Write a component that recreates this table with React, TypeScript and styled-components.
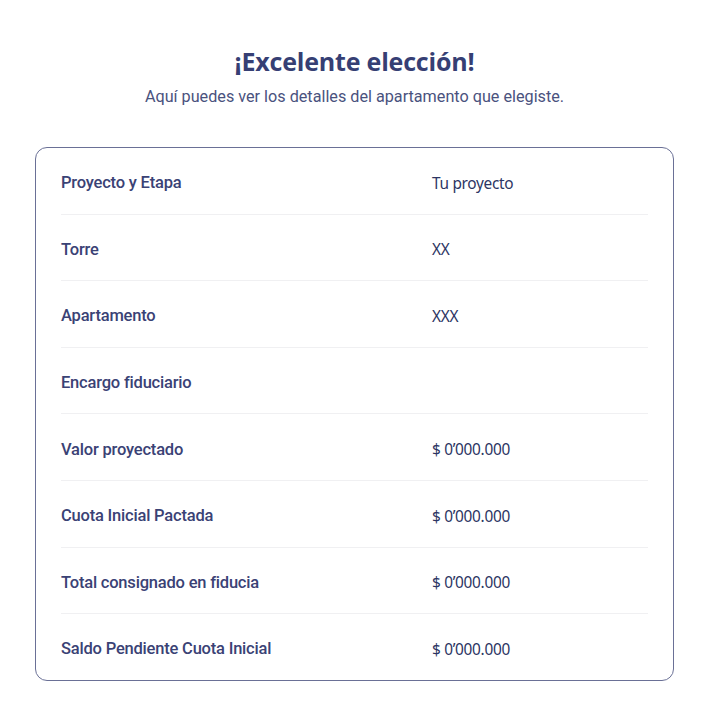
import React from "react";
import styled, { createGlobalStyle } from "styled-components";

const Global = createGlobalStyle`
  html, body { margin: 0; padding: 0; background: #ffffff; }
  body { font-family: Roboto, "Liberation Sans", sans-serif; }
`;

const Page = styled.div`
  width: 710px;
  box-sizing: border-box;
  padding: 44px 36px 0 35px;
  display: flex;
  flex-direction: column;
  align-items: stretch;
`;

const Header = styled.header`
  display: flex;
  flex-direction: column;
  align-items: center;
  gap: 9px;
  margin-bottom: 40px;
`;

const Title = styled.h1`
  margin: 0;
  font-family: "Open Sans", "Noto Sans", sans-serif;
  font-weight: 700;
  font-size: 25px;
  line-height: 34px;
  color: #363f74;
  letter-spacing: -0.2px;
`;

const Subtitle = styled.p`
  margin: 0;
  font-family: Roboto, "Liberation Sans", sans-serif;
  font-size: 16.2px;
  line-height: 20px;
  color: #4a527e;
`;

const Card = styled.section`
  border: 1.5px solid #6a7096;
  border-radius: 12px;
  padding: 0 25px;
  display: flex;
  flex-direction: column;
`;

const Row = styled.div`
  display: grid;
  grid-template-columns: 371px 1fr;
  align-items: center;
  height: 65.6px;
  border-bottom: 1px solid #f0f0f2;
  &:last-child { border-bottom: none; }
`;

const Label = styled.span`
  font-family: Roboto, "Liberation Sans", sans-serif;
  font-weight: 500;
  font-size: 16.5px;
  letter-spacing: -0.2px;
  color: #3a4275;
  padding-top: 4px;
`;

const Value = styled.span`
  font-family: "Noto Sans", "Open Sans", sans-serif;
  font-size: 15.4px;
  letter-spacing: -0.3px;
  color: #2c3563;
  padding-top: 5px;
`;

const rows: [string, string][] = [
  ["Proyecto y Etapa", "Tu proyecto"],
  ["Torre", "XX"],
  ["Apartamento", "XXX"],
  ["Encargo fiduciario", ""],
  ["Valor proyectado", "$ 0’000.000"],
  ["Cuota Inicial Pactada", "$ 0’000.000"],
  ["Total consignado en fiducia", "$ 0’000.000"],
  ["Saldo Pendiente Cuota Inicial", "$ 0’000.000"],
];

export default function App() {
  return (
    <>
      <Global />
      <Page>
        <Header>
          <Title>¡Excelente elección!</Title>
          <Subtitle>Aquí puedes ver los detalles del apartamento que elegiste.</Subtitle>
        </Header>
        <Card>
          {rows.map(([l, v]) => (
            <Row key={l}>
              <Label>{l}</Label>
              <Value>{v}</Value>
            </Row>
          ))}
        </Card>
      </Page>
    </>
  );
}
